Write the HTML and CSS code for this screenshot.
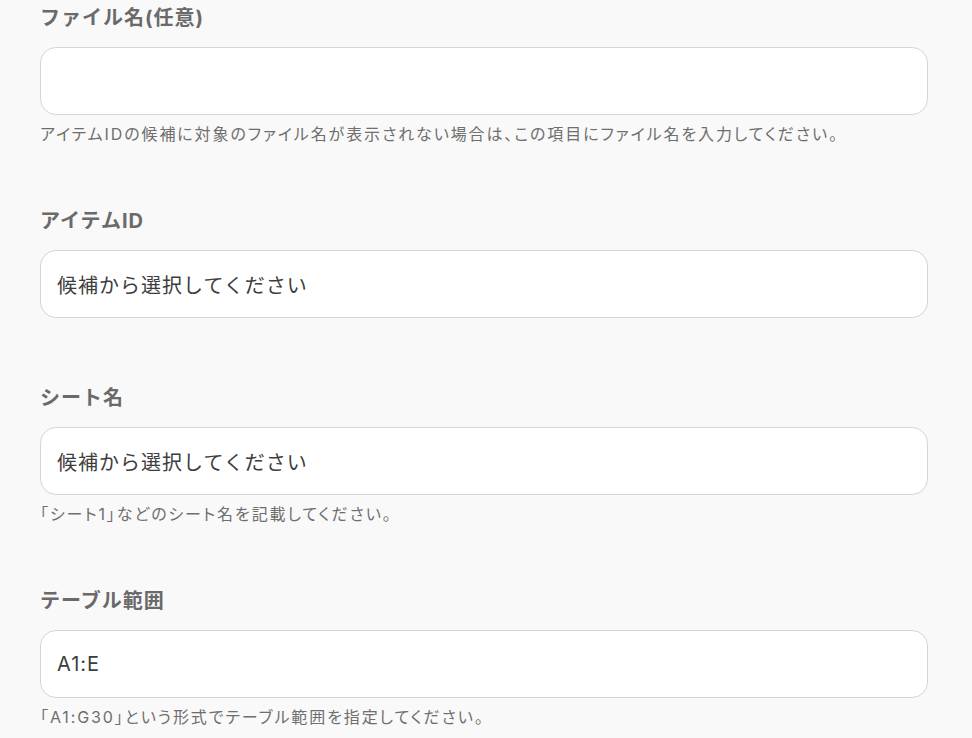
FILE: index.html
```html
<!DOCTYPE html>
<html lang="ja">
<head>
<meta charset="utf-8">
<title>設定</title>
<link rel="stylesheet" href="styles.css">
</head>
<body>
<main class="form">
  <div class="field">
    <label class="label">ファイル名(任意)</label>
    <div class="input"></div>
    <p class="help">アイテムIDの候補に対象のファイル名が表示されない場合は、この項目にファイル名を入力してください。</p>
  </div>
  <div class="field field--nohelp">
    <label class="label">アイテムID</label>
    <div class="input"><span class="value">候補から選択してください</span></div>
  </div>
  <div class="field">
    <label class="label">シート名</label>
    <div class="input"><span class="value">候補から選択してください</span></div>
    <p class="help">「シート1」などのシート名を記載してください。</p>
  </div>
  <div class="field">
    <label class="label">テーブル範囲</label>
    <div class="input"><span class="value">A1:E</span></div>
    <p class="help">「A1:G30」という形式でテーブル範囲を指定してください。</p>
  </div>
</main>
</body>
</html>
```
FILE: styles.css
```css
html, body {
  margin: 0;
  padding: 0;
  background: #f9f9f9;
}
body {
  font-family: Inter, "Noto Sans CJK JP", sans-serif;
  overflow: hidden;
}
.form {
  width: 888px;
  padding: 3px 0 0 40px;
  display: flex;
  flex-direction: column;
}
.field {
  display: flex;
  flex-direction: column;
  margin-bottom: 60px;
}
.field--nohelp {
  margin-bottom: 65px;
}
.label {
  display: block;
  font-size: 20px;
  line-height: 30px;
  font-weight: 700;
  color: #6a6a6a;
  letter-spacing: 1px;
  margin-bottom: 14px;
}
.input {
  box-sizing: border-box;
  height: 68px;
  background: #ffffff;
  border: 1px solid #d3d5dc;
  border-radius: 16px;
  padding: 0 16px;
  display: flex;
  align-items: center;
}
.value {
  font-size: 20px;
  color: #3d3d3d;
  letter-spacing: 1px;
}
.help {
  margin: 7px 0 0;
  font-size: 16px;
  line-height: 24px;
  color: #6e6e6e;
  font-feature-settings: "palt";
  letter-spacing: 1.9px;
}
```
